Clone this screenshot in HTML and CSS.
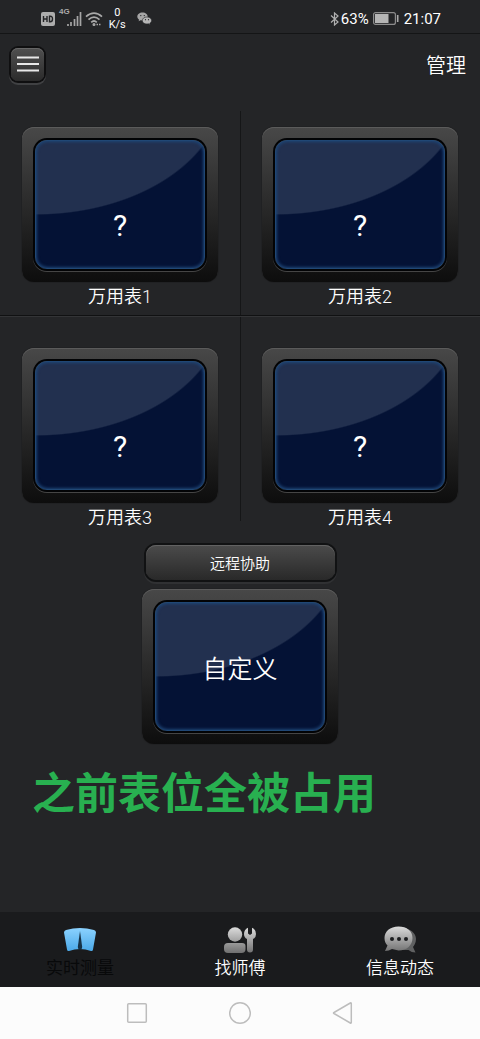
FILE: index.html
```html
<!DOCTYPE html>
<html lang="zh-CN">
<head>
<meta charset="utf-8">
<meta name="viewport" content="width=device-width, initial-scale=1">
<title>万用表</title>
<link rel="stylesheet" href="styles.css">
</head>
<body>
<div class="app">
  <div class="status">
    <div class="status-left">
      <svg width="14" height="14" viewBox="0 0 14 14" role="img" aria-label="HD"><rect width="14" height="14" rx="2" fill="#adadad"/><path d="M2.500 4v6M6 4v6M2.500 7H6M8.500 4.200v5.600h.7q2.300 0 2.300-2.800T9.200 4.200z" fill="none" stroke="#242527" stroke-width="1.400"/></svg>
      <span class="net">4G</span>
      <svg class="signal" width="15" height="14" viewBox="0 0 15 14"><path d="M1 14v-2M4 14v-4M7.500 14V7M10.500 14V4M13.500 14V0" stroke="#a5a5a5" stroke-width="1.700"/></svg>
      <svg class="wifi" width="18" height="14" viewBox="0 0 18 14" fill="none" stroke="#a9a9a9" stroke-width="1.700"><path d="M1 4.700q8-7 16 0M3.500 7.600q5.500-5 11 0M6.200 10.300q2.800-2.600 5.600 0"/><circle cx="9" cy="12.500" r=".7"/><path d="M11.500 12.500h4" stroke-dasharray="1.500 1"/></svg>
      <span class="rate"><span>0</span><span>K/s</span></span>
      <svg class="chat" width="15" height="13" viewBox="0 0 15 13"><path d="M5.500.5C2.500.5.3 2.300.3 4.600c0 1.300.7 2.400 1.800 3.100l-.5 1.600 1.900-1 2 .3c3 0 5.200-1.700 5.200-4S8.500.5 5.500.5z" fill="#a5a5a5"/><path d="M10 5c-2.700 0-4.700 1.500-4.700 3.600S7.300 12 10 12l1.500-.2 1.700.9-.4-1.500c1.200-.7 1.800-1.500 1.800-2.700C14.600 6.500 12.600 5 10 5z" fill="#b5b5b5" stroke="#242527" stroke-width=".6"/><g fill="#242527"><circle cx="3.800" cy="3.600" r=".7"/><circle cx="7.300" cy="3.600" r=".7"/><circle cx="8.500" cy="7.700" r=".6"/><circle cx="11.500" cy="7.700" r=".6"/></g></svg>
    </div>
    <div class="status-right">
      <svg width="10" height="14" viewBox="0 0 10 14" fill="none" stroke="#b0b0b0" stroke-width="1.200"><path d="M1 3.500l7 6.500-3.500 3V1L8 4 1 10.500"/></svg>
      <span>63%</span>
      <svg class="battery" width="26" height="13" viewBox="0 0 26 13"><rect x=".6" y=".6" width="21.800" height="11.800" rx="2" fill="none" stroke="#8c8c8c" stroke-width="1.200"/><rect x="2" y="2" width="13.500" height="9" fill="#b5b5b5"/><path d="M24.700 3v7" stroke="#aaa" stroke-width="1.600"/></svg>
      <span>21:07</span>
    </div>
  </div>
  <header class="bar">
    <button class="menu" aria-label="菜单"><svg width="22" height="16" viewBox="0 0 22 16"><path d="M0 1.500h22M0 8h22M0 14.500h22" stroke="#e8e8e8" stroke-width="2"/></svg></button>
    <button class="manage">管理</button>
  </header>
  <main>
    <div class="grid">
      <button class="cell"><span class="frame"><span class="screen">?</span></span><span class="label">万用表1</span></button>
      <button class="cell"><span class="frame"><span class="screen">?</span></span><span class="label">万用表2</span></button>
      <button class="cell"><span class="frame"><span class="screen">?</span></span><span class="label">万用表3</span></button>
      <button class="cell"><span class="frame"><span class="screen">?</span></span><span class="label">万用表4</span></button>
    </div>
    <div class="extra">
      <button class="remote">远程协助</button>
      <button class="frame custom"><span class="screen">自定义</span></button>
    </div>
    <p class="note">之前表位全被占用</p>
  </main>
  <nav class="tabs">
    <a class="tab active" href="#measure"><svg width="34" height="26" viewBox="0 0 34 26"><defs><linearGradient id="blue" x2="0" y2="1"><stop stop-color="#8bd2ff"/><stop offset="1" stop-color="#4ba9e8"/></linearGradient></defs><path d="M1 5.500Q1 3.500 3 3Q17-1 31 3q2 .5 2 2.500L30 22.500q-.3 2-2 1.500-11-4-22 0-1.700.5-2-1.500z" fill="url(#blue)"/><path d="M17 4l-2.200 16q0 2.500 2.200 2.500t2.200-2.500z" fill="#173246"/></svg><span>实时测量</span></a>
    <a class="tab" href="#master"><svg width="34" height="26" viewBox="0 0 34 26"><defs><linearGradient id="silver" gradientUnits="userSpaceOnUse" x1="0" y1="0" x2="0" y2="26"><stop stop-color="#ddd"/><stop offset="1" stop-color="#707070"/></linearGradient></defs><g fill="url(#silver)"><circle cx="12" cy="7.500" r="7.200"/><path d="M5 16h14q3.500 0 3.500 3v3q0 4-4 4H5q-4 0-4-4v-2q0-4 4-4z"/><path d="M25 .8v5.700l2 1.500 2-1.500V.8Q33 2.500 33 7q0 3.500-3 5v10.500q0 3-3 3t-3-3V12q-3-1.500-3-5 0-4.500 4-6.200z"/></g></svg><span>找师傅</span></a>
    <a class="tab" href="#news"><svg width="34" height="28" viewBox="0 0 34 28"><path d="M19 2c8 0 14 5 14 11 0 4-2 6.500-3 8l2.500 5.500q-4 0-7-2.500L17 24z" fill="#606162"/><path d="M15.500.5C7 .5 1.500 5.500 1.500 12c0 3 1 5.500 3 7.500L2 25q4 0 7-2l6.500 1.500c8.500 0 14-5.500 14-12.500S24 .5 15.500.5z" fill="url(#silver)"/><g fill="#1c1d1f"><circle cx="9" cy="13" r="2"/><circle cx="16" cy="13" r="2"/><circle cx="23" cy="13" r="2"/></g></svg><span>信息动态</span></a>
  </nav>
  <div class="system">
    <button aria-label="最近任务"><svg width="22" height="24" viewBox="0 0 22 24"><rect x="1.700" y="2.700" width="18.600" height="18.600" rx="1"/></svg></button>
    <button aria-label="主页"><svg width="22" height="24" viewBox="0 0 22 24"><circle cx="11" cy="12" r="10.300"/></svg></button>
    <button aria-label="返回"><svg width="22" height="24" viewBox="0 0 22 24"><path d="M18.300 2L2 11.500q-1 .5 0 1L18.300 22q1 .5 1-.5v-19q0-1-1-.5z"/></svg></button>
  </div>
</div>
</body>
</html>
```
FILE: styles.css
```css
* { box-sizing: border-box; }
body {
  margin: 0;
  background: #242527;
  color: #fff;
  font-family: Roboto, "Noto Sans CJK SC", sans-serif;
  font-weight: 400;
}
button {
  padding: 0;
  border: 0;
  background: none;
  color: inherit;
  font: inherit;
}
svg { display: block; flex: none; }
.app {
  min-height: 100vh;
  display: flex;
  flex-direction: column;
}
.status {
  height: 34px;
  padding: 4px 39px 0 41px;
  display: flex;
  justify-content: space-between;
  align-items: center;
  border-bottom: 1px solid #141516;
}
.status-left, .status-right { display: flex; align-items: center; }
.net { align-self: flex-start; margin-left: 4px; color: #aaa; font: 700 8px/10px "Liberation Sans", sans-serif; }
.status-left { height: 24px; }
.signal { margin-left: -3px; }
.wifi { margin-left: 3px; }
.rate {
  display: flex;
  flex-direction: column;
  align-items: center;
  margin: 0 8px 0 6px;
  font-size: 11px;
  line-height: 12px;
}
.chat { margin-left: 3px; }
.status-right { font-size: 15px; line-height: 20px; gap: 1px; }
.battery { margin: 0 4px 0 3px; }
.bar {
  height: 60px;
  padding: 0 14px 0 11px;
  display: flex;
  justify-content: space-between;
  align-items: center;
}
.menu {
  width: 33px;
  height: 33px;
  display: grid;
  place-items: center;
  border-radius: 7px;
  background: linear-gradient(#505050, #2b2b2b);
  box-shadow: 0 0 0 2px #0f0f10, 0 2px 0 2px #404143, inset 0 1px #666;
}
.manage { padding-top: 4px; font-size: 20px; line-height: 28px; font-weight: 350; }
main { flex: 1; }
.grid {
  display: grid;
  grid-template-columns: 1fr 1fr;
  margin-top: 17px;
}
.cell {
  display: flex;
  flex-direction: column;
  align-items: center;
}
.cell:nth-child(odd) { box-shadow: 1px 0 #151617; }
.cell:nth-child(-n+2) { height: 205px; padding-top: 16px; border-bottom: 1px solid #101112; }
.cell:nth-child(n+3) { height: 205px; padding-top: 31px; border-top: 1px solid #333436; }
.frame {
  width: 196px;
  height: 155px;
  padding: 13px;
  display: block;
  border-radius: 12px;
  background: linear-gradient(#484848, #2a2a2a 50%, #0d0d0d);
  box-shadow: inset 0 1px #5b5b5b, 0 0 1px #090909;
}
.screen {
  width: 100%;
  height: 129px;
  padding-top: 42px;
  display: grid;
  place-items: center;
  border-radius: 12px;
  border: 1px solid #204775;
  background: radial-gradient(ellipse 189px 128px at 0 -54px, #22304f 99%, #041235 100%);
  box-shadow: 0 0 0 2px #020305, 0 1px 0 2px #454545, inset 0 0 3px 1px #1d4475;
  font-size: 30px;
  line-height: 36px;
}
.label { padding-top: 1px; font-size: 18px; line-height: 28px; font-weight: 350; }
.extra {
  display: flex;
  flex-direction: column;
  align-items: center;
  gap: 9px;
  padding-top: 24px;
}
.remote {
  width: 189px;
  height: 35px;
  border-radius: 10px;
  background: linear-gradient(#4b4b4b, #292929);
  box-shadow: 0 0 0 2px #111213, 0 2px 0 2px #303133, inset 0 1px #626262;
  font-size: 15px;
  font-weight: 350;
}
.custom .screen { padding-top: 6px; font-size: 25px; font-weight: 350; }
.note {
  margin: 18px 0 0 32px;
  color: #28b050;
  font-size: 43px;
  font-weight: 700;
  line-height: 64px;
}
.tabs {
  height: 75px;
  padding-top: 14px;
  display: grid;
  grid-template-columns: repeat(3, 1fr);
  background: #1a1b1d;
}
.tab {
  display: flex;
  flex-direction: column;
  align-items: center;
  color: #fff;
  text-decoration: none;
  font-size: 17px;
  line-height: 28px;
  font-weight: 350;
}
.tab svg { height: 28px; }
.active { color: #08090a; font-weight: 400; }
.system {
  height: 52px;
  padding: 0 86px;
  display: grid;
  grid-template-columns: repeat(3, 1fr);
  place-items: center;
  background: #fcfcfc;
}
.system svg { fill: none; stroke: #bdbdbd; stroke-width: 1.5; }
```
